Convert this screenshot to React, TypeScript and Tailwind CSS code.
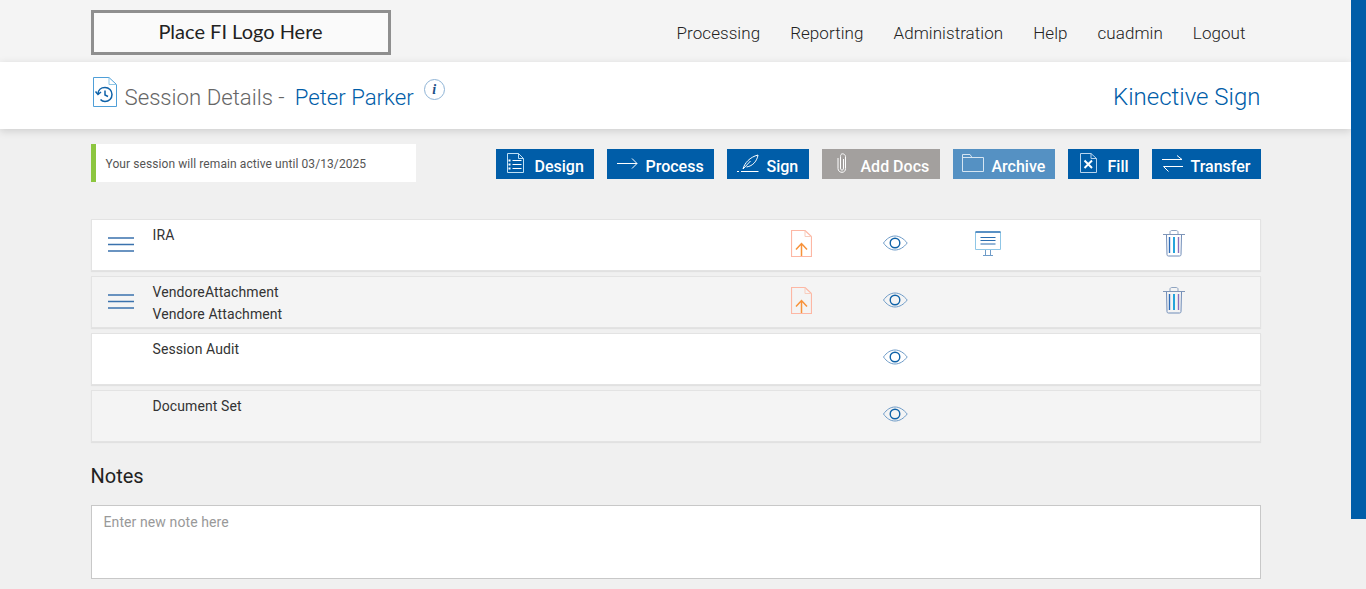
import React from 'react';

const UploadIcon = () => (
  <svg width="21" height="27" viewBox="0 0 21 27" fill="none">
    <path d="M0.5 0.5H14L20.5 6.5V26.5H0.5Z" stroke="#fdb7a4" strokeWidth="1.2" />
    <path d="M14 0.5V6.5H20.5" stroke="#f8cdbd" strokeWidth="1" />
    <path d="M10.5 26V14M5 19.5L10.5 13.5L16 19.5" stroke="#f7923a" strokeWidth="1.5" />
  </svg>
);

const EyeIcon = () => (
  <svg width="25" height="16" viewBox="0 0 25 16" fill="none">
    <path d="M0.5 8C3.6 3.6 7.6 1 12 1S20.8 3.6 24.2 8C20.8 12.4 16.6 15 12 15S3.6 12.4 0.5 8Z" stroke="#6f9cc8" strokeWidth="1" />
    <circle cx="12" cy="8" r="4.8" stroke="#0f62a8" strokeWidth="1.4" />
  </svg>
);

const MonitorIcon = () => (
  <svg width="26" height="25" viewBox="0 0 26 25" fill="none">
    <path d="M0.5 18.5V1H25.5V18.5H0.5Z" stroke="#8fc6e6" strokeWidth="1" />
    <path d="M0.5 1H25.5" stroke="#2a6db0" strokeWidth="1.4" />
    <path d="M5.5 6.5H20.5M5.5 9.5H20.5M5.5 13H20.5" stroke="#2a6db0" strokeWidth="1.2" />
    <path d="M10.5 19V24M15.5 19V24M8 24.5H18" stroke="#6f9cc8" strokeWidth="1" />
  </svg>
);

const TrashIcon = () => (
  <svg width="22" height="27" viewBox="0 0 22 27" fill="none">
    <path d="M0 4.5H22" stroke="#7f96b8" strokeWidth="1" />
    <path d="M7 4V2C7 1 8 0.5 9 0.5H13C14 0.5 15 1 15 2V4" stroke="#8fa4c0" strokeWidth="1" />
    <path d="M3.5 5L4 24.5C4 25.5 4.6 26 5.5 26H16.5C17.4 26 18 25.5 18 24.5L18.5 5" stroke="#6f8cb8" strokeWidth="1" />
    <path d="M6.5 7V23" stroke="#2f6cb8" strokeWidth="1.4" />
    <path d="M11 7V23" stroke="#0f9bd8" strokeWidth="1.8" />
    <path d="M15.5 7V23" stroke="#8a6fb8" strokeWidth="1.4" />
  </svg>
);

const DragHandle = () => (
  <svg width="26" height="15" viewBox="0 0 26 15" fill="none" className="block">
    <path d="M0 1H26M0 7.5H26M0 14H26" stroke="#3a72ad" strokeWidth="1.5" />
  </svg>
);

const DesignIcon = () => (
  <svg width="17" height="20" viewBox="0 0 17 20" fill="none" stroke="#fff" className="-mt-[2px]">
    <path d="M0.5 0.5H11.5L16.5 5.5V19.5H0.5Z" strokeWidth="1" stroke="#bfe0f5" />
    <path d="M11.5 0.5V5.5H16.5" strokeWidth="1" stroke="#bfe0f5" />
    <path d="M5.5 7.5H14.5M5.5 11.5H14.5M5.5 15.5H14.5" strokeWidth="1" />
    <path d="M2.5 6.5V8.5M2.5 10.5V12.5M2.5 14.5V16.5" strokeWidth="2" />
  </svg>
);

const ProcessIcon = () => (
  <svg width="21" height="11" viewBox="0 0 21 11" fill="none" stroke="#fff" strokeWidth="1" className="-mt-[2px]">
    <path d="M0 5.5H20M15 0.5L20 5.5L15 10.5" />
  </svg>
);

const SignIcon = () => (
  <svg width="22" height="19" viewBox="0 0 22 19" fill="none" stroke="#fff" strokeWidth="1" className="-mt-[1px]">
    <path d="M0 17.5H2M4 17.5H21.5" />
    <path d="M6 15C7.5 9 13 3 21 1C20 7 16 12 9.5 13M6 15L13.5 7" />
  </svg>
);

const ClipIcon = () => (
  <svg width="10" height="20" viewBox="0 0 10 20" fill="none" stroke="#fff" strokeWidth="1" className="-mt-[2px]">
    <path d="M6.5 6V15C6.5 16.5 6 17 5 17S3.5 16.5 3.5 15V3.5C3.5 2 4.2 0.8 5.5 0.8S8.5 2 8.5 3.5V15.5C8.5 18 7 19.3 5 19.3S1 18 1 15.5V5" />
  </svg>
);

const FolderIcon = () => (
  <svg width="22" height="18" viewBox="0 0 22 18" fill="none" stroke="#d5e5f2" strokeWidth="1" className="-mt-[2px]">
    <path d="M0.5 17.5V0.5H8L10 3.5H21.5V17.5ZM0.5 3.5H10" />
  </svg>
);

const FillIcon = () => (
  <svg width="17" height="20" viewBox="0 0 17 20" fill="none" className="-mt-[2px]">
    <path d="M0.5 0.5H11L16.5 5.5V19.5H0.5Z" stroke="#b8d4ee" strokeWidth="1" />
    <path d="M11 0.5V5.5H16.5" stroke="#b8d4ee" strokeWidth="1" />
    <path d="M4.5 7.5L12 15M12 7.5L4.5 15" stroke="#fff" strokeWidth="2" />
  </svg>
);

const TransferIcon = () => (
  <svg width="21" height="17" viewBox="0 0 21 17" fill="none" stroke="#fff" strokeWidth="1" className="-mt-[1px]">
    <path d="M0 4.5H20M15 0.5L20 4.5M21 11.5H1.5M6.5 16.5L1.5 11.5" />
  </svg>
);

const navItems = ['Processing', 'Reporting', 'Administration', 'Help', 'cuadmin', 'Logout'];

const actions = [
  { label: 'Design', icon: <DesignIcon />, bg: 'bg-[#005da8]', size: 'w-[98px] gap-[11px] pl-[11px]' },
  { label: 'Process', icon: <ProcessIcon />, bg: 'bg-[#005da8]', size: 'w-[107px] gap-[8px] pl-[10px]' },
  { label: 'Sign', icon: <SignIcon />, bg: 'bg-[#005da8]', size: 'w-[82px] gap-[8px] pl-[10px]' },
  { label: 'Add Docs', icon: <ClipIcon />, bg: 'bg-[#a3a09e]', size: 'w-[118px] gap-[14px] pl-[15px]' },
  { label: 'Archive', icon: <FolderIcon />, bg: 'bg-[#5591c3]', size: 'w-[102px] gap-[8px] pl-[9px]' },
  { label: 'Fill', icon: <FillIcon />, bg: 'bg-[#005da8]', size: 'w-[71px] gap-[11px] pl-[12px]' },
  { label: 'Transfer', icon: <TransferIcon />, bg: 'bg-[#005da8]', size: 'w-[109px] gap-[8px] pl-[10px]' },
];

const rows = [
  { lines: ['IRA'], handle: true, upload: true, monitor: true, trash: true, bg: 'bg-white' },
  { lines: ['VendoreAttachment', 'Vendore Attachment'], handle: true, upload: true, monitor: false, trash: true, bg: 'bg-[#f4f4f4]' },
  { lines: ['Session Audit'], handle: false, upload: false, monitor: false, trash: false, bg: 'bg-white' },
  { lines: ['Document Set'], handle: false, upload: false, monitor: false, trash: false, bg: 'bg-[#f4f4f4]' },
];

export default function App() {
  return (
    <div className="relative h-[589px] overflow-hidden bg-[#f0f0f0] font-['Roboto',sans-serif]">
      {/* custom scrollbar thumb */}
      <div className="absolute right-0 top-0 z-10 h-[519px] w-[15px] bg-[#005da8]" />

      <div className="w-[1351px]">
        <header className="h-[62px] bg-[#f4f4f4]">
          <div className="mx-auto flex h-full w-[1170px] items-start justify-between">
            <div className="mt-[10px] flex h-[45px] w-[300px] items-center justify-center border-[3px] border-[#8f8f8f] bg-[#fafafa] pb-[3px] font-['Lato',sans-serif] text-[20px] text-[#222]">
              Place FI Logo Here
            </div>
            <nav className="mr-[15px] mt-[22px] flex gap-[30px] text-[17px] font-light leading-[22px] tracking-[0.06px] text-[#222]">
              {navItems.map(item => (
                <span key={item}>{item}</span>
              ))}
            </nav>
          </div>
        </header>

        <div className="relative h-[67px] bg-white shadow-[0_2px_8px_rgba(0,0,0,0.15)]">
          <div className="mx-auto flex h-full w-[1170px] items-start justify-between">
            <div className="flex items-start">
              <svg width="24" height="30" viewBox="0 0 24 30" fill="none" className="ml-[2px] mt-[15px]">
                <path d="M0.5 0.5H16L23.5 7.5V29.5H0.5Z" stroke="#4f9fd8" strokeWidth="1" />
                <path d="M16 0.5V7.5H23.5" stroke="#8fc6e6" strokeWidth="1" />
                <path d="M5 17C5 13 8 10.5 12 10.5C16 10.5 19 13.5 19 17.5C19 21.5 16 24.5 12 24.5C10 24.5 8.5 23.7 7.5 22.5" stroke="#0f62a8" strokeWidth="1.5" />
                <path d="M2.5 14.5L5 17.5L8 15M12 13.5V18L15 19.5" stroke="#0f62a8" strokeWidth="1.5" />
              </svg>
              <h1 className="ml-[8px] mt-[21px] text-[22.2px] font-light leading-[28px] text-[#666]">
                Session Details -<span className="ml-[10px] text-[#005da8]">Peter Parker</span>
              </h1>
              <span className="ml-[10px] mt-[17px] flex h-[21px] w-[21px] items-center justify-center rounded-full border border-[#8fb4d6] font-['Liberation_Serif',serif] text-[14px] font-bold italic leading-none text-[#1d4f86]">
                i
              </span>
            </div>
            <span className="mt-[21px] text-[24px] font-light leading-[28px] text-[#005da8]">Kinective Sign</span>
          </div>
        </div>

        <main className="mx-auto w-[1170px]">
          <div className="mt-[15px] flex items-start justify-between">
            <div className="flex h-[38px] w-[325px] items-center border-l-[5px] border-[#8cc63f] bg-white pl-[10px] pt-[1px] text-[12px] tracking-[0.08px] text-[#555]">
              Your session will remain active until 03/13/2025
            </div>
            <div className="mt-[5px] flex gap-[13px]">
              {actions.map(a => (
                <button
                  key={a.label}
                  className={`flex h-[30px] items-center ${a.size} ${a.bg} text-[16px] font-medium leading-none text-white`}
                >
                  {a.icon}
                  <span className="mt-[6px]">{a.label}</span>
                </button>
              ))}
            </div>
          </div>

          <div className="mt-[37px] flex flex-col gap-[5px]">
            {rows.map(r => (
              <div
                key={r.lines[0]}
                className={`grid h-[52px] grid-cols-[61px_638px_92px_92px_188px_auto] border border-[#e3e3e3] shadow-[0_1px_1px_rgba(0,0,0,0.06)] ${r.bg}`}
              >
                <div className="pl-[16px] pt-[17px]">{r.handle && <DragHandle />}</div>
                <div className="pt-[4px] text-[14px] leading-[22px] tracking-[0.1px] text-[#333]">
                  {r.lines.map(l => (
                    <div key={l}>{l}</div>
                  ))}
                </div>
                <div className="pt-[10px]">{r.upload && <UploadIcon />}</div>
                <div className="pt-[15px]"><EyeIcon /></div>
                <div className="pt-[11px]">{r.monitor && <MonitorIcon />}</div>
                <div className="pt-[10px]">{r.trash && <TrashIcon />}</div>
              </div>
            ))}
          </div>

          <h2 className="mt-[22px] text-[20px] leading-[24px] text-[#222]">Notes</h2>
          <textarea
            placeholder="Enter new note here"
            className="mt-[17px] block h-[74px] w-full resize-none border border-[#c8c8c8] bg-white px-[12px] py-[7px] text-[14px] leading-[18px] tracking-[0.1px] placeholder:text-[#999]"
          />
        </main>
      </div>
    </div>
  );
}
